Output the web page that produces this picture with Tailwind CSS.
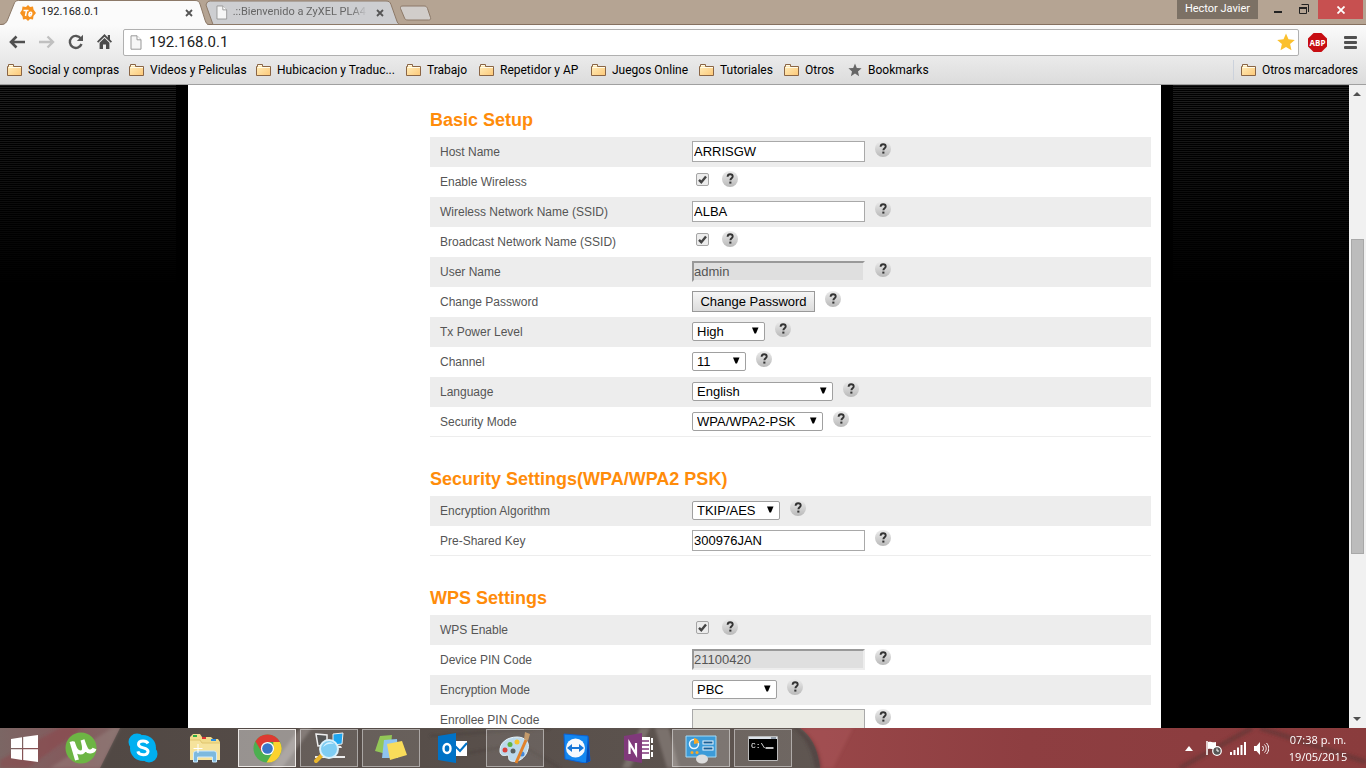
<!DOCTYPE html>
<html lang="en">
<head>
<meta charset="utf-8">
<title>192.168.0.1</title>
<script src="https://cdn.jsdelivr.net/npm/@tailwindcss/browser@4"></script>
</head>
<body class="flex h-screen flex-col overflow-hidden bg-black font-['Open_Sans','Noto_Sans',sans-serif] text-[12px] text-[#222]">

<!-- Shared symbols -->
<svg class="absolute size-0" aria-hidden="true">
  <defs>
    <linearGradient id="g-help" x1="0" y1="0" x2="0" y2="1"><stop offset="0" stop-color="#ececec"/><stop offset="1" stop-color="#b9b9b9"/></linearGradient>
    <linearGradient id="g-folder" x1="0" y1="0" x2="1" y2="1"><stop offset="0" stop-color="#fff0c0"/><stop offset="1" stop-color="#fdc877"/></linearGradient>
  </defs>
  <symbol id="help" viewBox="0 0 16 16">
    <circle cx="8" cy="8" r="8" fill="url(#g-help)"/>
    <path d="M5.600 5.800C5.700 4 6.700 3.300 8.100 3.300c1.500 0 2.600.8 2.600 2.100 0 1.800-2.300 1.900-2.300 3.900" fill="none" stroke="#333" stroke-width="1.900"/>
    <rect x="7.300" y="10.600" width="2.100" height="2" fill="#333"/>
  </symbol>
  <symbol id="folder" viewBox="0 0 16 14">
    <path d="M.5 12.500V3.500h1V1.500h5v2h8v9z" fill="url(#g-folder)" stroke="#8a6545" stroke-linejoin="round"/>
    <path d="M2 2.500h4M1.500 4.500h12.500" fill="none" stroke="#fffbe8"/>
  </symbol>
  <symbol id="arrow" viewBox="0 0 8 7"><path d="M1 .5h6.500L5 6.500H3.500z" fill="#000"/></symbol>
  <symbol id="check" viewBox="0 0 13 13"><path d="M3 6.800 5.300 9.200 10 3.500" fill="none" stroke="#444" stroke-width="2.400"/></symbol>
  <symbol id="page" viewBox="0 0 12 15"><path d="M1 .8h6l4 4v9.400H1z" fill="#f6f6f6" stroke="#999"/><path d="M7 .8v4h4" fill="#fff" stroke="#999"/></symbol>
  <symbol id="x" viewBox="0 0 8 8"><path d="M1 1l6 6M7 1 1 7" stroke="#555" stroke-width="1.800"/></symbol>
</svg>

<header class="shrink-0 border-b border-[#a0a0a0] font-[Roboto,'Open_Sans',sans-serif]">
  <!-- Tab strip -->
  <div class="flex h-[25px] justify-between bg-[#b5a493] shadow-[inset_0_-1px_0_#85705f]">
    <div class="flex">
      <div class="relative z-10 flex w-[209px] items-center pl-5 pr-3">
        <svg class="absolute inset-0 h-[25px] w-[209px]" viewBox="0 0 209 25"><path d="M0 25c4 0 6-1 7.500-5L14 4c1-2.500 2-3.500 4.500-3.500H195c3 0 4 1 5 3.500l5 16c1 3.500 2 5 4 5z" fill="#fbfbfb"/><path d="M0 24.500c4 0 6-1 7.500-4.500L14 4c1-2.500 2-3.500 4.500-3.500H195c3 0 4 1 5 3.500l5 16c1 3 2 4.500 4 4.500" fill="none" stroke="#8c7968"/></svg>
        <svg class="relative size-4" viewBox="0 0 16 16"><path d="M8 0l2 2 3-.5.500 3L16 8l-2.500 3-.5 3.500-3-.5-2 2-2-2-3 .5-.5-3L0 8l2-3 .5-3.500L6 2z" fill="#f7921e"/><path d="M3.500 5.500h5M6.500 5.500 5.500 11M8.500 9.500h3c1-3-2-3-2.500-.5s1 2.500 2.500 1.500" fill="none" stroke="#fff" stroke-width="1.500"/></svg>
        <span class="relative ml-[5px] flex-1 text-[11px]">192.168.0.1</span>
        <button aria-label="Close tab" class="relative mr-1"><svg class="size-2"><use href="#x"/></svg></button>
      </div>
      <div class="relative -ml-1 flex w-[195px] items-center pl-[11px] pr-4">
        <svg class="absolute inset-0 h-[25px] w-[195px]" viewBox="0 0 195 25"><path d="M1 5c1-3 2-4 4.500-4H181c3 0 4 1 5 3.500l5.500 15.500c1 3 2 4.500 3.500 4.500H8z" fill="#cdced1" stroke="#8c7968"/></svg>
        <svg class="relative h-[15px] w-3"><use href="#page"/></svg>
        <span class="relative ml-[5px] w-[138px] whitespace-nowrap text-[11px] text-[#666] [mask-image:linear-gradient(90deg,#000_88%,transparent)]">.::Bienvenido a ZyXEL PLA4</span>
        <button aria-label="Close tab" class="relative ml-[9px]"><svg class="size-2"><use href="#x"/></svg></button>
      </div>
      <button aria-label="New tab"><svg class="h-[25px] w-8" viewBox="0 0 32 25"><path d="M3 6h21c2 0 2.500.5 3.500 2.500l3 9c.5 2-.5 2.500-2 2.500H8c-2 0-3-.5-3.500-2l-4-9.500C0 6.500 1 6 3 6z" fill="#d1cdca" stroke="#8c7968"/></svg></button>
    </div>
    <div class="flex h-[19px] pr-[3px]">
      <span class="w-[81px] bg-[#7c7165] text-center text-[11px] leading-[18px] text-white">Hector Javier</span>
      <button aria-label="Minimize" class="ml-[7px] grid w-[26px] place-items-center"><svg class="h-[19px] w-[10px]" viewBox="0 0 10 19"><path d="M1 11h8v2H1z" fill="#222"/></svg></button>
      <button aria-label="Restore" class="grid w-[27px] place-items-center"><svg class="h-[11px] w-[11px]" viewBox="0 0 11 11" fill="none" stroke="#222"><path d="M.5 3.500h7v6h-7zM2.500 .5h7V8"/><path d="M0 4h8" stroke-width="2"/></svg></button>
      <button aria-label="Close" class="grid w-[45px] place-items-center bg-[#c75050]"><svg class="size-2" viewBox="0 0 8 8"><path d="M.5.5l7 7M7.500.5l-7 7" stroke="#fff" stroke-width="1.800"/></svg></button>
    </div>
  </div>

  <div class="bg-linear-to-b from-[#fbfbfb] to-[#dcdcdc]">
    <!-- Toolbar -->
    <div class="flex h-[31px] items-center pl-[9px] pr-[9px] pt-[3px]">
      <button aria-label="Back"><svg class="h-4 w-4" viewBox="0 0 16 16" fill="none"><path d="M7.500 2.500 2 8l5.500 5.500M2 8h14" stroke="#505050" stroke-width="2.600"/></svg></button>
      <button aria-label="Forward" class="ml-[14px]"><svg class="h-4 w-4" viewBox="0 0 16 16" fill="none" stroke="#c0c0c0" stroke-width="2.400"><path d="M8.500 2.500 14 8l-5.500 5.500M14 8H0"/></svg></button>
      <button aria-label="Reload" class="ml-[13px]"><svg class="h-4 w-4" viewBox="0 0 16 16"><path d="M12.800 4.500A6 6 0 1 0 13.500 10" fill="none" stroke="#555" stroke-width="2.400"/><path d="M15 .8V7H8.800z" fill="#555"/></svg></button>
      <button aria-label="Home" class="ml-[13px]"><svg class="h-4 w-4" viewBox="0 0 16 16" fill="#4c4c4c"><path d="M7.500 0 0 7.500l1.200 1.200L7.500 2.800l6.300 5.900L15 7.500l-2-2V1h-2.200v2.400z"/><path d="M2.600 8.700 7.500 4l4.900 4.700V15H9v-4.500H6V15H2.600z"/></svg></button>
      <div class="ml-[10px] flex h-[27px] min-w-0 flex-1 items-center rounded-xs border border-[#b0b0b0] bg-white px-[6px]">
        <svg class="h-[15px] w-3"><use href="#page"/></svg>
        <input aria-label="Address" value="192.168.0.1" class="ml-[7px] min-w-0 flex-1 bg-transparent text-[15px] leading-5 text-[#222] outline-none">
        <button aria-label="Bookmark this page" class="-mr-1 pr-px"><svg class="h-[18px] w-[18px]" viewBox="0 0 18 18"><path d="M9 .5l2.500 5.800 6.300.6-4.700 4.200 1.400 6.200L9 14.100l-5.500 3.200 1.400-6.200L.2 6.900l6.300-.6z" fill="#fbc02d"/></svg></button>
      </div>
      <button aria-label="Adblock Plus" class="ml-[9px]"><svg class="h-[19px] w-[19px]" viewBox="0 0 19 19"><path d="M5.600 0h7.800L19 5.600v7.800L13.400 19H5.600L0 13.400V5.600z" fill="#c70d12"/><text x="9.500" y="12.500" font-size="8" font-weight="700" text-anchor="middle" fill="#fff" font-family="Open Sans">ABP</text></svg></button>
      <button aria-label="Menu" class="ml-[17px]"><svg class="h-[13px] w-[13px]" viewBox="0 0 13 13" fill="#505050"><rect width="13" height="3" rx="1"/><rect y="5" width="13" height="3" rx="1"/><rect y="10" width="13" height="3" rx="1"/></svg></button>
    </div>
    <!-- Bookmarks bar -->
    <nav class="flex h-7 items-center whitespace-nowrap pl-[7px] pr-2 text-[12px] text-black">
      <a href="#" class="flex w-[122px] items-center gap-[5px]"><svg class="h-[14px] w-4"><use href="#folder"/></svg>Social y compras</a>
      <a href="#" class="flex w-[127px] items-center gap-[5px]"><svg class="h-[14px] w-4"><use href="#folder"/></svg>Videos y Peliculas</a>
      <a href="#" class="flex w-[150px] items-center gap-[5px]"><svg class="h-[14px] w-4"><use href="#folder"/></svg>Hubicacion y Traduc...</a>
      <a href="#" class="flex w-[73px] items-center gap-[5px]"><svg class="h-[14px] w-4"><use href="#folder"/></svg>Trabajo</a>
      <a href="#" class="flex w-[112px] items-center gap-[5px]"><svg class="h-[14px] w-4"><use href="#folder"/></svg>Repetidor y AP</a>
      <a href="#" class="flex w-[108px] items-center gap-[5px]"><svg class="h-[14px] w-4"><use href="#folder"/></svg>Juegos Online</a>
      <a href="#" class="flex w-[85px] items-center gap-[5px]"><svg class="h-[14px] w-4"><use href="#folder"/></svg>Tutoriales</a>
      <a href="#" class="flex w-[64px] items-center gap-[5px]"><svg class="h-[14px] w-4"><use href="#folder"/></svg>Otros</a>
      <a href="#" class="flex items-center gap-[6px]"><svg class="h-[14px] w-[14px]" viewBox="0 0 14 14"><path d="M7 .5l1.800 4.400 4.800.4-3.600 3.100 1.100 4.800L7 10.600l-4.100 2.600L4 8.400.4 5.300l4.800-.4z" fill="#666"/></svg>Bookmarks</a>
      <a href="#" class="ml-auto flex h-5 items-center gap-[5px] border-l border-[#ccd2dc] pl-[7px]"><svg class="h-[14px] w-4"><use href="#folder"/></svg>Otros marcadores</a>
    </nav>
  </div>
</header>

<div class="flex min-h-0 flex-1">
  <div class="min-w-0 flex-1 overflow-hidden bg-[linear-gradient(transparent,#000_200px),repeating-linear-gradient(#1e1e1e_0_1px,#000_1px_2px)]">
    <div class="mx-auto max-w-[997px] bg-black px-3">
      <main class="bg-white pb-10 pl-[242px] pr-[10px] pt-4 font-['Liberation_Sans',Arial,sans-serif] text-[12px] text-[#555]">

        <h2 class="h-9 text-[18px] leading-[38px] font-bold text-[#ff8c0a]">Basic Setup</h2>
        <form class="[&>div:nth-child(odd)]:bg-[#ededed] [&>div:last-child]:border-b [&>div:last-child]:border-[#ededed] [&>div]:flex [&>div]:h-[30px] [&>div>label]:w-[262px] [&>div>label]:pl-[10px] [&>div>label]:leading-[30px]">
          <div><label for="host">Host Name</label><input id="host" value="ARRISGW" class="mt-1 h-[21px] w-[173px] border border-[#a9a9a9] bg-white px-px text-[13px] text-black"><button type="button" aria-label="Help" class="ml-[10px] mt-1 size-4"><svg class="size-4"><use href="#help"/></svg></button></div>
          <div><label for="wl">Enable Wireless</label><span class="relative ml-1 mt-[6px] size-[13px]"><input id="wl" type="checkbox" checked class="block size-[13px] appearance-none rounded-xs border border-[#a5a5a5] bg-[#ececec]"><svg class="pointer-events-none absolute inset-0 size-[13px]"><use href="#check"/></svg></span><button type="button" aria-label="Help" class="ml-[13px] mt-1 size-4"><svg class="size-4"><use href="#help"/></svg></button></div>
          <div><label for="ssid">Wireless Network Name (SSID)</label><input id="ssid" value="ALBA" class="mt-1 h-[21px] w-[173px] border border-[#a9a9a9] bg-white px-px text-[13px] text-black"><button type="button" aria-label="Help" class="ml-[10px] mt-1 size-4"><svg class="size-4"><use href="#help"/></svg></button></div>
          <div><label for="bc">Broadcast Network Name (SSID)</label><span class="relative ml-1 mt-[6px] size-[13px]"><input id="bc" type="checkbox" checked class="block size-[13px] appearance-none rounded-xs border border-[#a5a5a5] bg-[#ececec]"><svg class="pointer-events-none absolute inset-0 size-[13px]"><use href="#check"/></svg></span><button type="button" aria-label="Help" class="ml-[13px] mt-1 size-4"><svg class="size-4"><use href="#help"/></svg></button></div>
          <div><label for="user">User Name</label><input id="user" value="admin" disabled class="mt-1 h-[21px] w-[173px] border-2 border-t-[#999] border-r-[#ededed] border-b-[#ededed] border-l-[#999] bg-[#dfdfdf] text-[13px] text-[#555]"><button type="button" aria-label="Help" class="ml-[10px] mt-1 size-4"><svg class="size-4"><use href="#help"/></svg></button></div>
          <div><label for="pw">Change Password</label><button id="pw" type="button" class="mt-1 h-[21px] w-[123px] border border-[#999] bg-linear-to-b from-[#f6f6f6] to-[#dcdcdc] text-[13px] leading-[19px] text-black">Change Password</button><button type="button" aria-label="Help" class="ml-[10px] mt-1 size-4"><svg class="size-4"><use href="#help"/></svg></button></div>
          <div><label for="tx">Tx Power Level</label><span class="relative mt-[5px] h-[19px]"><select id="tx" class="block h-[19px] w-[73px] appearance-none rounded-xs border border-[#a0a0a0] bg-white pl-1 text-[13px] leading-[17px] text-black"><option>High</option></select><svg class="pointer-events-none absolute right-[6px] top-[5px] h-[7px] w-2"><use href="#arrow"/></svg></span><button type="button" aria-label="Help" class="ml-[10px] mt-1 size-4"><svg class="size-4"><use href="#help"/></svg></button></div>
          <div><label for="ch">Channel</label><span class="relative mt-[5px] h-[19px]"><select id="ch" class="block h-[19px] w-[54px] appearance-none rounded-xs border border-[#a0a0a0] bg-white pl-1 text-[13px] leading-[17px] text-black"><option>11</option></select><svg class="pointer-events-none absolute right-[6px] top-[5px] h-[7px] w-2"><use href="#arrow"/></svg></span><button type="button" aria-label="Help" class="ml-[10px] mt-1 size-4"><svg class="size-4"><use href="#help"/></svg></button></div>
          <div><label for="lang">Language</label><span class="relative mt-[5px] h-[19px]"><select id="lang" class="block h-[19px] w-[141px] appearance-none rounded-xs border border-[#a0a0a0] bg-white pl-1 text-[13px] leading-[17px] text-black"><option>English</option></select><svg class="pointer-events-none absolute right-[6px] top-[5px] h-[7px] w-2"><use href="#arrow"/></svg></span><button type="button" aria-label="Help" class="ml-[10px] mt-1 size-4"><svg class="size-4"><use href="#help"/></svg></button></div>
          <div><label for="sec">Security Mode</label><span class="relative mt-[5px] h-[19px]"><select id="sec" class="block h-[19px] w-[131px] appearance-none rounded-xs border border-[#a0a0a0] bg-white pl-1 text-[13px] leading-[17px] text-black"><option>WPA/WPA2-PSK</option></select><svg class="pointer-events-none absolute right-[6px] top-[5px] h-[7px] w-2"><use href="#arrow"/></svg></span><button type="button" aria-label="Help" class="ml-[10px] mt-1 size-4"><svg class="size-4"><use href="#help"/></svg></button></div>
        </form>

        <h2 class="mt-[23px] h-9 text-[18px] leading-[38px] font-bold text-[#ff8c0a]">Security Settings(WPA/WPA2 PSK)</h2>
        <form class="[&>div:nth-child(odd)]:bg-[#ededed] [&>div:last-child]:border-b [&>div:last-child]:border-[#ededed] [&>div]:flex [&>div]:h-[30px] [&>div>label]:w-[262px] [&>div>label]:pl-[10px] [&>div>label]:leading-[30px]">
          <div><label for="enc">Encryption Algorithm</label><span class="relative mt-[5px] h-[19px]"><select id="enc" class="block h-[19px] w-[88px] appearance-none rounded-xs border border-[#a0a0a0] bg-white pl-1 text-[13px] leading-[17px] text-black"><option>TKIP/AES</option></select><svg class="pointer-events-none absolute right-[6px] top-[5px] h-[7px] w-2"><use href="#arrow"/></svg></span><button type="button" aria-label="Help" class="ml-[10px] mt-1 size-4"><svg class="size-4"><use href="#help"/></svg></button></div>
          <div><label for="psk">Pre-Shared Key</label><input id="psk" value="300976JAN" class="mt-1 h-[21px] w-[173px] border border-[#a9a9a9] bg-white px-px text-[13px] text-black"><button type="button" aria-label="Help" class="ml-[10px] mt-1 size-4"><svg class="size-4"><use href="#help"/></svg></button></div>
        </form>

        <h2 class="mt-[23px] h-9 text-[18px] leading-[38px] font-bold text-[#ff8c0a]">WPS Settings</h2>
        <form class="[&>div:nth-child(odd)]:bg-[#ededed] [&>div:last-child]:border-b [&>div:last-child]:border-[#ededed] [&>div]:flex [&>div]:h-[30px] [&>div>label]:w-[262px] [&>div>label]:pl-[10px] [&>div>label]:leading-[30px]">
          <div><label for="wps">WPS Enable</label><span class="relative ml-1 mt-[6px] size-[13px]"><input id="wps" type="checkbox" checked class="block size-[13px] appearance-none rounded-xs border border-[#a5a5a5] bg-[#ececec]"><svg class="pointer-events-none absolute inset-0 size-[13px]"><use href="#check"/></svg></span><button type="button" aria-label="Help" class="ml-[13px] mt-1 size-4"><svg class="size-4"><use href="#help"/></svg></button></div>
          <div><label for="pin">Device PIN Code</label><input id="pin" value="21100420" disabled class="mt-1 h-[21px] w-[173px] border-2 border-t-[#999] border-r-[#ededed] border-b-[#ededed] border-l-[#999] bg-[#dfdfdf] text-[13px] text-[#555]"><button type="button" aria-label="Help" class="ml-[10px] mt-1 size-4"><svg class="size-4"><use href="#help"/></svg></button></div>
          <div><label for="mode">Encryption Mode</label><span class="relative mt-[5px] h-[19px]"><select id="mode" class="block h-[19px] w-[85px] appearance-none rounded-xs border border-[#a0a0a0] bg-white pl-1 text-[13px] leading-[17px] text-black"><option>PBC</option></select><svg class="pointer-events-none absolute right-[6px] top-[5px] h-[7px] w-2"><use href="#arrow"/></svg></span><button type="button" aria-label="Help" class="ml-[10px] mt-1 size-4"><svg class="size-4"><use href="#help"/></svg></button></div>
          <div><label for="enr">Enrollee PIN Code</label><input id="enr" class="mt-1 h-[21px] w-[173px] border border-[#a9a9a9] bg-[#ebebe4] px-px text-[13px]"><button type="button" aria-label="Help" class="ml-[10px] mt-1 size-4"><svg class="size-4"><use href="#help"/></svg></button></div>
        </form>
      </main>
    </div>
  </div>
  <!-- Scroll bar -->
  <div class="flex w-[17px] shrink-0 flex-col items-center bg-[#f1f1f1] pr-px" aria-hidden="true">
    <svg class="h-[17px] w-2" viewBox="0 0 8 17"><path d="M0 11 4 7l4 4z" fill="#505050"/></svg>
    <div class="grow-[137]"></div>
    <div class="w-[13px] grow-[314] border border-[#a8a8a8] bg-[#bcbcbc]"></div>
    <div class="grow-[158]"></div>
    <svg class="h-[17px] w-2" viewBox="0 0 8 17"><path d="M0 6h8l-4 4z" fill="#505050"/></svg>
  </div>
</div>

<!-- Taskbar -->
<footer class="relative flex h-10 shrink-0 items-center bg-[#5c524d] text-white">
  <svg class="absolute inset-0 h-10 w-full" viewBox="0 0 1366 40" preserveAspectRatio="none" aria-hidden="true">
    <defs>
      <linearGradient id="tb-l"><stop offset="0" stop-color="#7b6664"/><stop offset=".6" stop-color="#85595c"/><stop offset="1" stop-color="#806664"/></linearGradient>
      <linearGradient id="tb-m"><stop offset="0" stop-color="#4f4642"/><stop offset=".5" stop-color="#5c534e"/><stop offset="1" stop-color="#6c625f"/></linearGradient>
      <linearGradient id="tb-r"><stop offset="0" stop-color="#994749"/><stop offset=".4" stop-color="#8e3e41"/><stop offset="1" stop-color="#8a3c3d"/></linearGradient>
      <filter id="soft" x="-5%" y="-50%" width="110%" height="200%"><feGaussianBlur stdDeviation="1.500"/></filter>
    </defs>
    <rect width="1366" height="40" fill="url(#tb-m)"/>
    <path d="M0 0h120L100 40H0z" fill="url(#tb-l)"/>
    <g filter="url(#soft)">
      <path d="M0 32 60 0h22L28 40H0z" fill="#8d3f47" opacity=".45"/>
      <path d="M50 40 112 0h8L100 40z" fill="#a08f8c" opacity=".35"/>
      <path d="M270 40 300 0h12l-30 40zM655 0h14l10 40h-12zM640 0l-18 40h8L650 0z" fill="#a89e9a" opacity=".4"/>
      <path d="M430 8l120-8M440 30l80-14 40 24" stroke="#443b37" stroke-width="2" fill="none" opacity=".6"/>
    </g>
    <path d="M800 0c12 8 18 22 20 40h546V0z" fill="url(#tb-r)"/>
    <g filter="url(#soft)">
      <path d="M797 0c16 10 22 22 24 40h-6C812 22 806 10 793 0z" fill="#4b3c3a" opacity=".6"/>
      <path d="M803 0h50l-20 40h-10c-2-18-8-30-20-40z" fill="#a9585a" opacity=".5"/>
      <path d="M1180 40l72-40M1260 0l106 34" stroke="#5c3533" stroke-width="5" fill="none" opacity=".55"/>
    </g>
  </svg>
  <div class="relative flex h-full items-center gap-1">
    <button aria-label="Start" class="grid h-10 w-12 place-items-center"><svg class="h-[27px] w-[27px]" viewBox="0 0 27 27" fill="#fff"><path d="M0 4 11 2.300V13H0zM12.200 2.100 27 0v13H12.200zM0 14.200h11V25L0 23.300zM12.200 14.200H27V27l-14.800-2z"/></svg></button>
    <button aria-label="uTorrent" class="grid h-10 w-[58px] place-items-center"><svg class="size-8" viewBox="0 0 32 32"><circle cx="16" cy="16" r="15.500" fill="#6db544"/><path d="M6.500 9.500 12 28" fill="none" stroke="#fff" stroke-width="4"/><path d="M7.800 10C10 17 11.500 20.500 15.500 20.500s4.500-4 2-12.500c3 9 4.500 12 8 11.500 2-.3 3.500-1.500 4-3" fill="none" stroke="#fff" stroke-width="4"/></svg></button>
    <button aria-label="Skype" class="grid h-10 w-[58px] place-items-center"><svg class="size-[30px]" viewBox="0 0 30 30"><circle cx="9" cy="9" r="8.500" fill="#00aff0"/><circle cx="21" cy="21" r="8.500" fill="#00aff0"/><circle cx="15" cy="15" r="13" fill="#00aff0"/><path d="M20 10.500C19 8.500 17 8 15 8c-2.500 0-4.500 1-4.500 3.200 0 4.800 9.500 2.500 9.500 7 0 2.300-2.200 3.500-4.800 3.500-2.700 0-4.700-1-5.400-3.300" fill="none" stroke="#fff" stroke-width="3"/></svg></button>
    <button aria-label="File Explorer" class="grid h-10 w-[58px] place-items-center"><svg class="size-8" viewBox="0 0 32 32"><path d="M1 5l3-3h7l2 3h9l2 2h5l2 3v15H1z" fill="#f1dc8b"/><path d="M4 3h4v2H4z" fill="#2fae43"/><path d="M13 5h4v2h-4z" fill="#d33"/><path d="M22 7h5v2h-5z" fill="#2a8de0"/><path d="M1 8h10l2 3h18v17H1z" fill="#f6e39c"/><path d="M1 8h10l2 3h18" stroke="#dfc56f" fill="none"/><path d="M4.500 30v-8c0-2 1-3 3-3h17c2 0 3 1 3 3v8h-4v-5h-15v5z" fill="#7db9de" stroke="#cdeaff"/><path d="M9 12v9M4.500 16.500h9" stroke="#fff"/></svg></button>
    <button aria-label="Chrome" class="grid h-[38px] w-[58px] place-items-center border border-[#ece8e5] bg-white/40"><svg class="size-[29px]" viewBox="0 0 30 30"><circle cx="15" cy="15" r="14.500" fill="#4caf50"/><path d="M2.500 7.500A14.500 14.500 0 0 1 27.800 8.200H15L9 18.500z" fill="#dd3a32"/><path d="M27.800 8.200A14.500 14.500 0 0 1 14 29.500L21 18V8.200z" fill="#fcd22f"/><circle cx="15" cy="15" r="6.800" fill="#fff"/><circle cx="15" cy="15" r="5.500" fill="#3a76c8"/></svg></button>
    <button aria-label="Network scanner" class="grid h-[38px] w-[58px] place-items-center border border-white/45 bg-white/10"><svg class="size-8" viewBox="0 0 32 32"><path d="M3 2l11 1v10l-9 1z" fill="#555" stroke="#eee" stroke-width="1.500"/><path d="M20 2l10-1-1 11-9 1z" fill="#1ea5ef" stroke="#eee"/><path d="M2 25h30" stroke="#eee" stroke-width="2"/><path d="M21 13l7 1 1 2h-8z" fill="#eee"/><path d="M9.500 22.500 3 29" stroke="#e8b52c" stroke-width="4" stroke-linecap="round"/><circle cx="16" cy="17" r="9" fill="#7fcdf3" stroke="#d8f0fb" stroke-width="2"/><path d="M10 15c2-5 8-6 11-3-4-1-8 0-11 3z" fill="#d6f2ff"/></svg></button>
    <button aria-label="Sticky Notes" class="grid h-[38px] w-[58px] place-items-center border border-white/45 bg-white/10"><svg class="size-8" viewBox="0 0 32 32"><path d="M5 4l12-1-2 20-15-4z" fill="#93c757"/><path d="M9 8l13-1 1 19H7z" fill="#8fc4ef"/><path d="M12 12l15-3 5 14-17 5z" fill="#f9dc5a"/></svg></button>
    <button aria-label="Outlook" class="grid h-10 w-[58px] place-items-center"><svg class="size-[30px]" viewBox="0 0 30 30"><path d="M16 8h13v15H16z" fill="#fff"/><path d="M17 13l5 5 7-8" fill="none" stroke="#0072c6" stroke-width="2"/><path d="M0 3l18-3v30L0 27z" fill="#0072c6"/><ellipse cx="9" cy="15.500" rx="3.500" ry="4.500" fill="none" stroke="#fff" stroke-width="2.400"/></svg></button>
    <button aria-label="Paint" class="grid h-[38px] w-[58px] place-items-center border border-white/45 bg-white/10"><svg class="size-8" viewBox="0 0 32 32"><path d="M1 20C0 11 8 5 18 5c8 0 13 5 11 12-2 9-10 14-17 12-4-1-1-6-4-6-3 1-6 1-7-3z" fill="#bcd9ec" stroke="#e8f5fc"/><circle cx="6" cy="18" r="2.500" fill="#d9433c"/><circle cx="11" cy="12.500" r="2.500" fill="#5fb446"/><circle cx="18" cy="10" r="2.500" fill="#f4c32c"/><circle cx="14" cy="19" r="2.500" fill="#5a615f"/><circle cx="23" cy="22" r="2.500" fill="#4689d8"/><path d="M17 31 27 8" stroke="#e1822b" stroke-width="3"/><path d="M25 7l1-7 5 2-2 7z" fill="#c39a6b"/></svg></button>
    <button aria-label="TeamViewer" class="grid h-10 w-[58px] place-items-center"><svg class="size-[30px]" viewBox="0 0 30 30"><path d="M2 1l24 2 2 25-5 2L3 26z" fill="#1387f0" stroke="#0b62d6"/><path d="M26 3l2 25-4 2z" fill="#064bb5"/><circle cx="13.500" cy="15" r="9.500" fill="#f5f9fd"/><path d="M5 15l5-4v3h7v-3l5 4-5 4v-3h-7v3z" fill="#1576d8"/></svg></button>
    <button aria-label="OneNote" class="grid h-10 w-[58px] place-items-center"><svg class="size-[30px]" viewBox="0 0 30 30"><path d="M15 4h11v22H15z" fill="#fff"/><path d="M18 8h7M18 12h7M18 16h7M18 20h7" stroke="#80397b" stroke-width="1.500"/><path d="M27 5h2v5h-2zM27 12h2v5h-2zM27 19h2v5h-2z" fill="#fff"/><path d="M0 3l18-3v30L0 27z" fill="#80397b"/><path d="M5.500 21V10l6.500 11V10" fill="none" stroke="#fff" stroke-width="2.200"/></svg></button>
    <button aria-label="Control Panel" class="grid h-[38px] w-[58px] place-items-center border border-white/45 bg-white/20"><svg class="size-8" viewBox="0 0 32 32"><path d="M1 4h30v21H1z" fill="#3c9bd8" stroke="#a4dbf7"/><circle cx="9" cy="12" r="4.500" fill="none" stroke="#e9f6ff" stroke-width="1.500"/><path d="M9 12V6a6 6 0 0 1 5 5z" fill="#f7a928"/><rect x="18" y="9" width="10" height="3" fill="#1a5f96" stroke="#e9f6ff"/><rect x="18" y="15" width="10" height="3" fill="#1a5f96" stroke="#e9f6ff"/><circle cx="7" cy="20.500" r="1.500" fill="#f7a928"/><circle cx="12" cy="20.500" r="1.500" fill="#f7a928"/><ellipse cx="17" cy="27" rx="6" ry="4.500" fill="#ddd"/></svg></button>
    <button aria-label="Command Prompt" class="grid h-[38px] w-[58px] place-items-center border border-white/45 bg-white/10"><svg class="h-[25px] w-[30px]" viewBox="0 0 30 25"><path d="M.5.500h29v24H.5z" fill="#000" stroke="#bbb"/><path d="M1 1h28v2H1z" fill="#dde3ea"/><path d="M23 2h5" stroke="#456"/><text x="3" y="12" font-family="Liberation Mono" font-size="8" fill="#fff">C:\</text><path d="M17.500 12h8" stroke="#fff" stroke-width="1.500"/></svg></button>
  </div>
  <div class="relative ml-auto flex items-center pr-[17px]">
    <svg class="h-[5px] w-2" viewBox="0 0 8 5"><path d="M4 0l4 5H0z" fill="#fff"/></svg>
    <svg class="ml-[13px] h-[15px] w-4" viewBox="0 0 16 15"><path d="M1 0v14" stroke="#fff" stroke-width="1.500"/><path d="M2 1c3-1 4 1 8 0v7C7 9 5 7 2 8z" fill="#fff"/><circle cx="11" cy="10" r="4.300" fill="#555" stroke="#fff" stroke-width="1.200"/><path d="M11 7.500V10h2" stroke="#fff" fill="none"/></svg>
    <svg class="ml-2 h-[13px] w-4" viewBox="0 0 16 13" fill="#fff"><path d="M0 10h2v3H0zM3.500 8h2v5h-2zM7 5.500h2V13H7zM10.500 3h2v10h-2zM14 0h2v13h-2z"/></svg>
    <svg class="ml-2 h-[13px] w-[15px]" viewBox="0 0 15 13"><path d="M0 4h2.500L6 0v13L2.500 9H0z" fill="#fff"/><path d="M8.500 4c1.300 1.500 1.300 3.500 0 5M10.500 2.500c2.300 2.500 2.300 5.500 0 8M12.500 1c3 3.500 3 7.500 0 11" fill="none" stroke="#fff"/></svg>
    <time datetime="2015-05-19T19:38" class="ml-[18px] w-[62px] whitespace-nowrap text-center text-[11px] leading-[17px]">07:38 p. m.<br>19/05/2015</time>
  </div>
</footer>
</body>
</html>
